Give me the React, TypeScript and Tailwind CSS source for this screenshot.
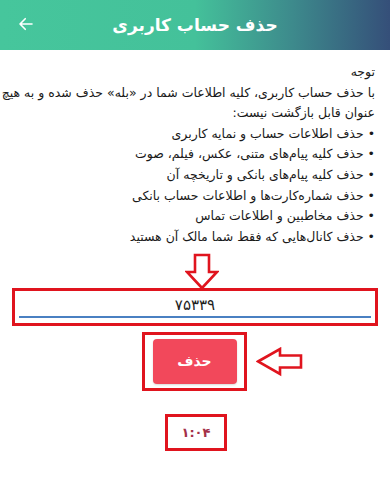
import React from "react";

const lines = [
  "• حذف اطلاعات حساب و نمایه کاربری",
  "• حذف کلیه پیام‌های متنی، عکس، فیلم، صوت",
  "• حذف کلیه پیام‌های بانکی و تاریخچه آن",
  "• حذف شماره‌کارت‌ها و اطلاعات حساب بانکی",
  "• حذف مخاطبین و اطلاعات تماس",
  "• حذف کانال‌هایی که فقط شما مالک آن هستید",
];

function DownArrow() {
  return (
    <svg width="34" height="38" viewBox="0 0 34 38" className="block">
      <polygon
        points="10,2 24,2 24,19 32,19 17,35 2,19 10,19"
        fill="white"
        stroke="#e0141e"
        strokeWidth="2.6"
        strokeLinejoin="miter"
      />
    </svg>
  );
}

function LeftArrow() {
  return (
    <svg width="48" height="30" viewBox="0 0 48 30" className="block">
      <polygon
        points="2,14.5 24,2 24,8.5 45,8.5 45,20.5 24,20.5 24,27"
        fill="white"
        stroke="#e0141e"
        strokeWidth="2.6"
      />
    </svg>
  );
}

export default function App() {
  return (
    <div
      className="w-[390px] h-[480px] bg-white overflow-hidden"
      style={{ fontFamily: '"DejaVu Sans", "Noto Sans", sans-serif' }}
    >
      <div className="h-[50px] flex items-center relative bg-[linear-gradient(to_right,#46c69c_0%,#44c19a_50%,#3d8a8c_75%,#354f79_100%)]">
        <svg
          width="18"
          height="18"
          viewBox="0 0 24 24"
          className="absolute left-[17px] top-[15px]"
          fill="none"
          stroke="white"
          strokeWidth="2.2"
          strokeLinecap="round"
          strokeLinejoin="round"
        >
          <path d="M20 12H4M11 5l-7 7 7 7" />
        </svg>
        <div dir="rtl" className="w-full text-center text-white text-[17px] font-bold leading-none">
          حذف حساب کاربری
        </div>
      </div>

      <div dir="rtl" className="pt-[12px] pr-[15px] pl-[12px] text-[12.5px] leading-[20.6px] text-[#1a1a1a]">
        <div>توجه</div>
        <div className="whitespace-nowrap">با حذف حساب کاربری، کلیه اطلاعات شما در «بله» حذف شده و به هیچ</div>
        <div>عنوان قابل بازگشت نیست:</div>
        {lines.map((l) => (
          <div key={l}>{l}</div>
        ))}
      </div>

      <div className="flex justify-center pl-[14px] mt-[6px]">
        <DownArrow />
      </div>

      <div className="mx-[12px] w-[366px] h-[38px] border-[3px] border-[#e0141e] relative -mt-[3px] flex justify-center">
        <div className="text-[15px] text-[#222] mt-[4px] leading-[20px]">۷۵۳۳۹</div>
        <div className="absolute left-[4px] right-[4px] bottom-[5px] h-[2px] bg-[#4a80c2]" />
      </div>

      <div className="flex items-center mt-[6px]">
        <div className="ml-[142px] w-[105px] h-[59px] border-[3px] border-[#e0141e] flex items-center justify-center">
          <div className="w-[84px] h-[45px] rounded-[4px] bg-[#f2485b] flex items-center justify-center text-white text-[14px] font-bold shadow-[0_1px_2px_rgba(0,0,0,0.15)]">
            حذف
          </div>
        </div>
        <div className="ml-[9px]">
          <LeftArrow />
        </div>
      </div>

      <div className="flex mt-[23px]">
        <div className="ml-[165px] w-[62px] h-[37px] border-[3px] border-[#e0141e] flex items-center justify-center text-[13px] font-bold text-[#a33048]">
          ۱:۰۴
        </div>
      </div>
    </div>
  );
}
